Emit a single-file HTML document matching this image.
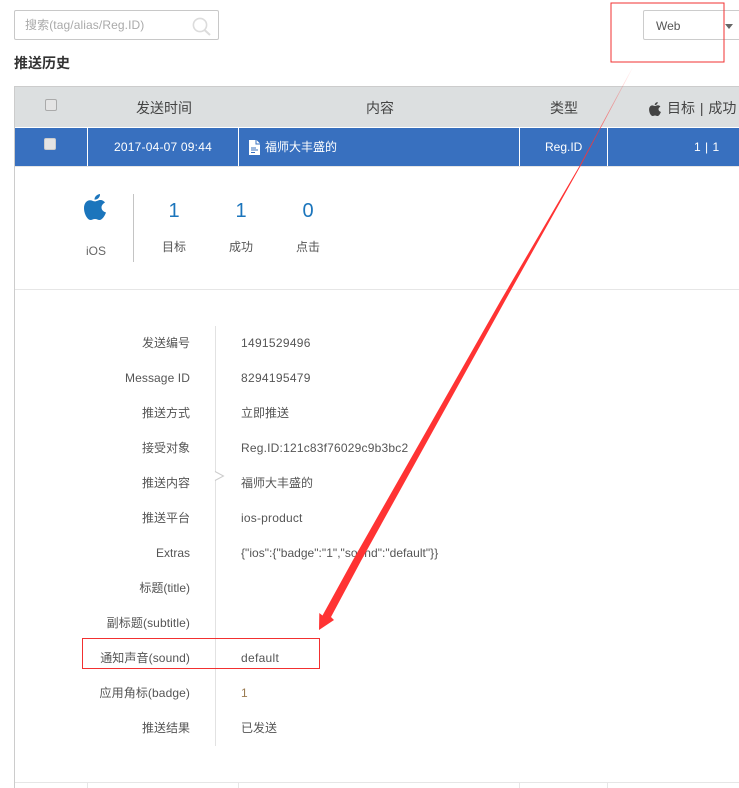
<!DOCTYPE html>
<html>
<head>
<meta charset="utf-8">
<style>
html,body{margin:0;padding:0;background:#fff}
body{width:739px;height:788px;position:relative;overflow:hidden;font-family:"Liberation Sans","Noto Sans CJK SC",sans-serif;font-size:12px;color:#555}
.a{position:absolute;white-space:nowrap}
.l{position:absolute;left:60px;width:130px;text-align:right;white-space:nowrap;line-height:16px;color:#555}
.v{position:absolute;left:241px;white-space:nowrap;line-height:16px;color:#555}
.cb{position:absolute;width:10px;height:10px;border:1px solid #aaa;border-radius:2px;background:#e4e4e4}
.th{position:absolute;top:99px;font-size:14px;line-height:18px;color:#444;white-space:nowrap}
.td{position:absolute;top:139px;line-height:16px;color:#fff;white-space:nowrap}
.vw{position:absolute;top:128px;width:1px;height:38px;background:#fff}
.vb{position:absolute;top:782px;width:1px;height:6px;background:#e6e6e6}
</style>
</head>
<body>
<div class="a" style="left:14px;top:10px;width:203px;height:28px;border:1px solid #c8c8c8;border-radius:2px"></div>
<div class="a" style="left:25px;top:17px;line-height:16px;color:#aaa;letter-spacing:.1px">搜索(tag/alias/Reg.ID)</div>
<svg class="a" style="left:192px;top:17px" width="20" height="20" viewBox="0 0 20 20" fill="none" stroke="#dcdcdc" stroke-width="1.6"><circle cx="8" cy="8" r="6.6"/><path d="M12.6 13l5.400 5" stroke-width="2"/></svg>
<div class="a" style="left:14px;top:54px;font-size:14px;font-weight:bold;line-height:18px;color:#333">推送历史</div>

<div class="a" style="left:643px;top:10px;width:110px;height:28px;border:1px solid #ccc;border-radius:2px"></div>
<div class="a" style="left:656px;top:18px;line-height:16px;color:#555">Web</div>
<div class="a" style="left:725px;top:24px;width:0;height:0;border-left:4px solid transparent;border-right:4px solid transparent;border-top:5px solid #666"></div>

<div class="a" style="left:14px;top:86px;width:725px;height:41px;background:#dcdfe0;border-top:1px solid #ccc;box-sizing:border-box"></div>
<div class="a" style="left:14px;top:86px;width:1px;height:702px;background:#ccc"></div>
<div class="cb" style="left:45px;top:99px"></div>
<div class="th" style="left:136px">发送时间</div>
<div class="th" style="left:366px">内容</div>
<div class="th" style="left:550px">类型</div>
<svg class="a" style="left:649px;top:102px" width="12" height="14" viewBox="0 0 22 26" fill="#444"><path d="M16 0C16.300 3 13.500 6 10.500 5.600 10.300 2.800 13 .4 16 0Z"/><path d="M22 18.500C20.500 22.500 18 26 15.500 26 13.800 26 13 25 11 25 9 25 8.200 26 6.500 26 3.500 26 0 20 0 14 0 9 3 6.200 6 6.200 8 6.200 9.400 7.400 11 7.400 12.600 7.400 14 6 16.500 6 18.300 6 20 7 21 8.500 18.800 9.800 17.500 11.500 17.500 13.500 17.500 16 19.500 17.800 22 18.500Z"/></svg>
<div class="th" style="left:667px;word-spacing:1px">目标 | 成功</div>

<div class="a" style="left:15px;top:128px;width:724px;height:38px;background:#3870bf"></div>
<div class="vw" style="left:87px"></div>
<div class="vw" style="left:238px"></div>
<div class="vw" style="left:519px"></div>
<div class="vw" style="left:607px"></div>
<div class="cb" style="left:44px;top:138px;background:#e4e4e4;border-color:#ccc"></div>
<div class="td" style="left:114px;letter-spacing:.2px">2017-04-07 09:44</div>
<svg class="a" style="left:249px;top:140px" width="11" height="15" viewBox="0 0 11 15"><path d="M0 0h6.500v4.500H11V15H0z" fill="#fff"/><path d="M7.500 0L11 3.500H7.500z" fill="#fff"/><path d="M2 8h5M2 10h7M2 12.500h4" stroke="#3870bf" stroke-width="1"/></svg>
<div class="td" style="left:265px">福师大丰盛的</div>
<div class="td" style="left:545px">Reg.ID</div>
<div class="td" style="left:694px;word-spacing:1px">1 | 1</div>
<div class="a" style="left:15px;top:166px;width:724px;height:1px;background:#e6e6e6"></div>

<svg class="a" style="left:84px;top:194px" width="22" height="26" viewBox="0 0 22 26" fill="#1b75bc"><path d="M16 0C16.300 3 13.500 6 10.500 5.600 10.300 2.800 13 .4 16 0Z"/><path d="M22 18.500C20.500 22.500 18 26 15.500 26 13.800 26 13 25 11 25 9 25 8.200 26 6.500 26 3.500 26 0 20 0 14 0 9 3 6.200 6 6.200 8 6.200 9.400 7.400 11 7.400 12.600 7.400 14 6 16.500 6 18.300 6 20 7 21 8.500 18.800 9.800 17.500 11.500 17.500 13.500 17.500 16 19.500 17.800 22 18.500Z"/></svg>
<div class="a" style="left:86px;top:243px;line-height:16px;color:#666">iOS</div>
<div class="a" style="left:133px;top:194px;width:1px;height:68px;background:#c4c4c4"></div>
<div class="a" style="left:164px;top:199px;width:20px;text-align:center;font-size:20px;line-height:24px;color:#1b75bc">1</div>
<div class="a" style="left:231px;top:199px;width:20px;text-align:center;font-size:20px;line-height:24px;color:#1b75bc">1</div>
<div class="a" style="left:298px;top:199px;width:20px;text-align:center;font-size:20px;line-height:24px;color:#1b75bc">0</div>
<div class="a" style="left:162px;top:239px;line-height:16px;color:#555">目标</div>
<div class="a" style="left:229px;top:239px;line-height:16px;color:#555">成功</div>
<div class="a" style="left:296px;top:239px;line-height:16px;color:#555">点击</div>
<div class="a" style="left:15px;top:289px;width:724px;height:1px;background:#e6e6e6"></div>

<div class="a" style="left:215px;top:326px;width:1px;height:420px;background:#e2e2e2"></div>
<svg class="a" style="left:214px;top:470px" width="11" height="12" viewBox="0 0 11 12" fill="#fff" stroke="#ccc"><path d="M1 1.500L9.500 6 1 10.500"/></svg>

<div class="l" style="top:335px">发送编号</div><div class="v" style="top:335px;letter-spacing:.3px">1491529496</div>
<div class="l" style="top:370px;letter-spacing:.1px">Message ID</div><div class="v" style="top:370px;letter-spacing:.3px">8294195479</div>
<div class="l" style="top:405px">推送方式</div><div class="v" style="top:405px">立即推送</div>
<div class="l" style="top:440px">接受对象</div><div class="v" style="top:440px;letter-spacing:.2px">Reg.ID:121c83f76029c9b3bc2</div>
<div class="l" style="top:475px">推送内容</div><div class="v" style="top:475px">福师大丰盛的</div>
<div class="l" style="top:510px">推送平台</div><div class="v" style="top:510px;letter-spacing:.2px">ios-product</div>
<div class="l" style="top:545px">Extras</div><div class="v" style="top:545px;letter-spacing:.03px">{"ios":{"badge":"1","sound":"default"}}</div>
<div class="l" style="top:580px">标题(title)</div>
<div class="l" style="top:615px;letter-spacing:.1px">副标题(subtitle)</div>
<div class="l" style="top:650px;letter-spacing:.1px">通知声音(sound)</div><div class="v" style="top:650px;letter-spacing:.3px">default</div>
<div class="l" style="top:685px;letter-spacing:.1px">应用角标(badge)</div><div class="v" style="top:685px;color:#9a7a50">1</div>
<div class="l" style="top:720px">推送结果</div><div class="v" style="top:720px">已发送</div>

<div class="a" style="left:15px;top:782px;width:724px;height:1px;background:#e6e6e6"></div>
<div class="vb" style="left:87px"></div>
<div class="vb" style="left:238px"></div>
<div class="vb" style="left:519px"></div>
<div class="vb" style="left:607px"></div>

<svg class="a" style="left:0;top:0" width="739" height="788" viewBox="0 0 739 788">
<defs><linearGradient id="g" gradientUnits="userSpaceOnUse" x1="633" y1="66" x2="585" y2="158"><stop offset="0" stop-color="#ff3333" stop-opacity="0"/><stop offset="1" stop-color="#ff3333"/></linearGradient></defs>
<path d="M632 68L632.800 68L580.500 166L505.500 300L361.500 560L331 617L334 620L319 630L319.300 613L322.500 615.500L353 560L501 300L579.500 166Z" fill="url(#g)"/>
<rect x="611" y="3" width="113" height="59" fill="none" stroke="#f23030" stroke-width="1"/>
<rect x="82.500" y="638.500" width="237" height="30" fill="none" stroke="#f23030" stroke-width="1"/>
</svg>
</body>
</html>
